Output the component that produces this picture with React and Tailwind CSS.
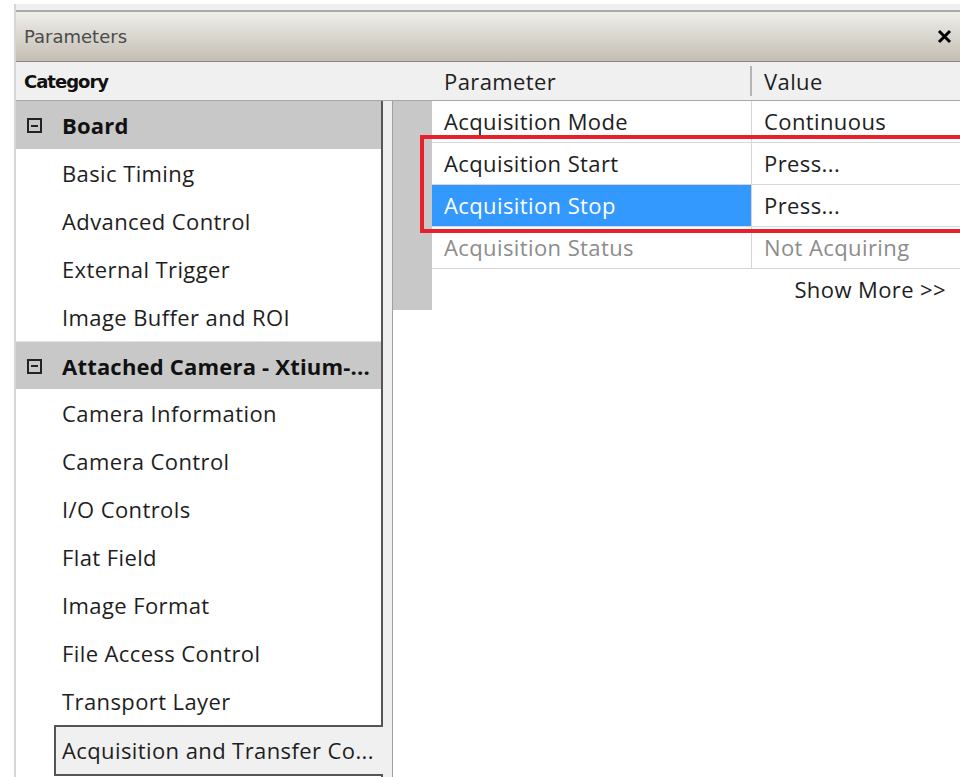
const boardItems = ["Basic Timing", "Advanced Control", "External Trigger", "Image Buffer and ROI"];
const cameraItems = [
  "Camera Information",
  "Camera Control",
  "I/O Controls",
  "Flat Field",
  "Image Format",
  "File Access Control",
  "Transport Layer",
];

const params = [
  { name: "Acquisition Mode", value: "Continuous" },
  { name: "Acquisition Start", value: "Press..." },
  { name: "Acquisition Stop", value: "Press...", selected: true },
  { name: "Acquisition Status", value: "Not Acquiring", disabled: true },
];

function MinusBox() {
  return (
    <span className="flex h-[15px] w-[15px] items-center justify-center border-2 border-[#222]">
      <span className="h-[2px] w-[7px] bg-[#222]" />
    </span>
  );
}

function CategoryRow({ label, top }) {
  return (
    <div
      className={`flex h-[48px] items-center bg-[#c8c8c8] pl-[11px] pt-[1px] ${
        top ? "" : "border-t border-[#e2e2e2]"
      }`}
    >
      <MinusBox />
      <span className="ml-[20px] truncate text-[22px] font-bold tracking-[0.2px] text-[#111]">
        {label}
      </span>
    </div>
  );
}

function ItemRow({ label }) {
  return (
    <div className="flex h-[48px] items-center pl-[46px] text-[22px] tracking-[0.4px] text-[#1e1e1e]">
      {label}
    </div>
  );
}

function CloseIcon() {
  return (
    <svg width="15" height="15" viewBox="0 0 15 15">
      <path d="M2 2 L13 13 M13 2 L2 13" stroke="#000" strokeWidth="3" />
    </svg>
  );
}

export default function App() {
  return (
    <div
      className="h-[777px] w-[960px] overflow-hidden bg-white pl-[14px] pt-[4px]"
      style={{ fontFamily: '"Open Sans", "Noto Sans", sans-serif' }}
    >
      <div className="flex h-full flex-col border-l-2 border-[#d6d6d6] bg-[#efefef] pt-[6px]">
        {/* window caption */}
        <div className="flex h-[52px] items-center justify-between border-b border-t-2 border-b-[#8f8a80] border-t-[#a9a9a9] bg-gradient-to-b from-[#efeee9] to-[#c3beb4] pl-[8px] pr-[8px]">
          <span
            className="text-[18px] text-[#4b4b4b]"
            style={{ fontFamily: '"DejaVu Sans", sans-serif' }}
          >
            Parameters
          </span>
          <CloseIcon />
        </div>

        {/* column headers */}
        <div className="flex h-[39px] items-center border-b border-[#a8a8a8] bg-[#f0f0f0] text-[22px] tracking-[0.4px] text-[#1e1e1e]">
          <span
            className="w-[416px] pl-[8px] text-[18px] font-bold tracking-[-1px] text-[#111]"
            style={{ fontFamily: '"DejaVu Sans", sans-serif' }}
          >
            Category
          </span>
          <span className="w-[320px] border-r-2 border-[#b4b4b4] pl-[12px] leading-[30px]">Parameter</span>
          <span className="pl-[12px]">Value</span>
        </div>

        <div className="flex min-h-0 flex-1">
          {/* category tree */}
          <div className="flex w-[376px] shrink-0 flex-col">
            <div className="flex h-[626px] shrink-0">
              <div className="flex w-[367px] flex-col border-r-2 border-[#555] bg-white">
                <CategoryRow label="Board" top />
                {boardItems.map((item) => (
                  <ItemRow key={item} label={item} />
                ))}
                <CategoryRow label="Attached Camera - Xtium-..." />
                {cameraItems.map((item) => (
                  <ItemRow key={item} label={item} />
                ))}
                <div className="mt-auto ml-[38px] border-b-2 border-[#555]" />
              </div>
            </div>
            <div className="flex h-[47px] shrink-0">
              <div className="w-[38px] bg-white" />
              <div className="flex flex-1 items-center border-l-2 border-[#555] bg-[#f0f0f0] pl-[6px] text-[22px] tracking-[0.4px] text-[#1e1e1e]">
                Acquisition and Transfer Co...
              </div>
            </div>
            <div className="flex flex-1">
              <div className="w-[367px] border-r-2 border-[#555] bg-white">
                <div className="ml-[38px] border-t-2 border-[#555]" />
              </div>
            </div>
          </div>

          {/* parameter grid */}
          <div className="relative flex-1 border-l border-[#a0a0a0] bg-white">
            <div className="flex">
              <div className="w-[39px] shrink-0 bg-[#c8c8c8]" />
              <div className="flex-1 text-[22px] tracking-[0.4px]">
                {params.map((p) => (
                  <div key={p.name} className="flex h-[42px] border-b border-[#d6d6d6]">
                    <div
                      className={`flex w-[320px] items-center border-r border-[#d6d6d6] pl-[12px] ${
                        p.selected ? "bg-[#3399ff] text-white" : p.disabled ? "text-[#8c8c8c]" : "text-[#1e1e1e]"
                      }`}
                    >
                      {p.name}
                    </div>
                    <div
                      className={`flex items-center pl-[12px] ${
                        p.disabled ? "text-[#8c8c8c]" : "text-[#1e1e1e]"
                      }`}
                    >
                      {p.value}
                    </div>
                  </div>
                ))}
                <div className="flex h-[41px] items-center justify-end pr-[14px] text-[#1e1e1e]">
                  Show More &gt;&gt;
                </div>
              </div>
            </div>

            {/* highlight around the start/stop commands */}
            <div className="absolute left-[27px] right-[-10px] top-[34px] h-[98px] border-4 border-[#e8202c]" />
          </div>
        </div>
      </div>
    </div>
  );
}
